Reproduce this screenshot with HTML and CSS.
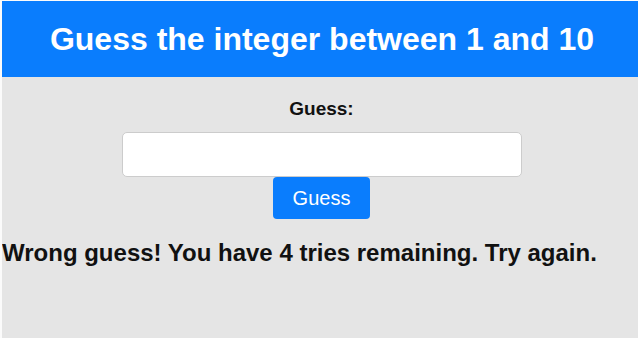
FILE: index.html
```html
<!DOCTYPE html>
<html lang="en">
<head>
    <meta charset="UTF-8">
    <title>Guess the integer</title>
    <link rel="stylesheet" href="styles.css">
</head>
<body>
    <div class="header">
        <h1>Guess the integer between 1 and 10</h1>
    </div>

    <div class="game_container">
        <label class="guess_label" for="guess_input">Guess:</label>
        <input class="guess_input" id="guess_input" type="text">
        <button class="guess_button" id="btn_guess">Guess</button>
    </div>

    <p class="message">Wrong guess! You have 4 tries remaining. Try again.</p>
</body>
</html>
```

FILE: styles.css
```css
html {
    background: #fbfbfb;
}

body {
    margin: 1px 0 0 2px;
    min-height: 337px;
    background: #e5e5e5;
    font-family: "Liberation Sans", Arial, sans-serif;
}

.header {
    height: 76px;
    padding-left: 4px;
    background: #0a7dfd;
    display: flex;
    justify-content: center;
    align-items: center;
}

.header h1 {
    margin: 0;
    color: white;
    font-size: 32px;
    font-weight: bold;
}

.game_container {
    display: flex;
    flex-direction: column;
    align-items: center;
    padding-top: 21px;
    padding-left: 3px;
}

.guess_label {
    font-size: 19px;
    font-weight: bold;
    color: #111;
    margin-bottom: 12px;
}

.guess_input {
    box-sizing: border-box;
    width: 400px;
    height: 45px;
    border: 1px solid #ccc;
    border-radius: 5px;
    background: white;
}

.guess_button {
    width: 97px;
    height: 42px;
    border: none;
    border-radius: 4px;
    background: #0a7dfd;
    color: white;
    font-family: "Liberation Sans", Arial, sans-serif;
    font-size: 20px;
}

.message {
    margin: 20px 0 0 0;
    font-size: 24px;
    font-weight: bold;
    color: #111;
}
```
